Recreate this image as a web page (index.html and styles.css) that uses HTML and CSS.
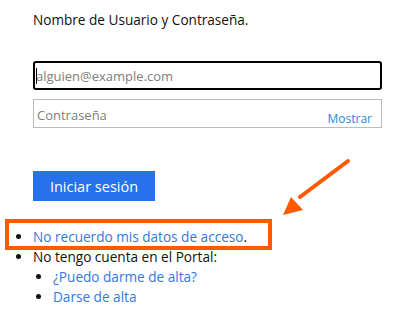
FILE: index.html
```html
<!DOCTYPE html>
<html lang="es">
<head>
  <meta charset="UTF-8" />
  <meta name="viewport" content="width=device-width, initial-scale=1.0">
  <title>Iniciar sesión</title>
  <link rel="stylesheet" href="styles.css">
</head>
<body>

  <main class="login">
    <p class="titulo">Nombre de Usuario y Contraseña.</p>

    <form class="formulario">
      <div class="campo campo-activo">
        <span class="cursor"></span>
        <input type="email" placeholder="alguien@example.com">
      </div>
      <div class="campo">
        <input type="password" placeholder="Contraseña">
        <a href="#" class="mostrar">Mostrar</a>
      </div>
      <button type="button" class="btn-entrar">Iniciar sesión</button>
    </form>
  </main>

  <ul class="ayuda">
    <li><a href="#">No recuerdo mis datos de acceso</a>.</li>
    <li>No tengo cuenta en el Portal:
      <ul>
        <li><a href="#">¿Puedo darme de alta?</a></li>
        <li><a href="#">Darse de alta</a></li>
      </ul>
    </li>
  </ul>

  <!-- anotación -->
  <div class="marco"></div>
  <svg class="flecha" width="80" height="60" viewBox="0 0 80 60">
    <line x1="76" y1="4" x2="28" y2="40" stroke="#ff5a00" stroke-width="4" stroke-linecap="round" />
    <polygon points="11,58 19,40 31,53" fill="#ff5a00" />
  </svg>

</body>
</html>
```

FILE: styles.css
```css
* { box-sizing: border-box; }
body {
  font-family: 'Open Sans', 'Noto Sans', sans-serif;
  font-size: 13.6px;
  margin: 0;
  background: white;
  color: #111;
  position: relative;
  height: 321px;
  overflow: hidden;
}
a {
  color: #3179e4;
  text-decoration: none;
}
.login {
  padding: 10px 11px 0 33px;
}
.titulo {
  margin: 0;
  line-height: 20px;
}
.formulario {
  margin-top: 31px;
  display: flex;
  flex-direction: column;
}
.campo {
  position: relative;
  height: 29px;
  border: 1px solid #bbb;
  margin-bottom: 9px;
}
.campo input {
  border: none;
  outline: none;
  width: 100%;
  height: 100%;
  padding: 2px 3px 0;
  font: inherit;
  font-size: 13px;
  background: transparent;
}
.campo input::placeholder {
  color: #808080;
}
.campo-activo {
  height: 29px;
  border: 2px solid #000;
  border-radius: 3px;
}
.campo-activo input {
  padding: 0 1px;
}
.cursor {
  position: absolute;
  left: 1px;
  top: 5px;
  width: 1px;
  height: 16px;
  background: #000;
}
.mostrar {
  position: absolute;
  right: 9px;
  bottom: 0;
  color: #2b88d8;
  font-size: 12px;
}
.btn-entrar {
  margin-top: 34px;
  width: 122px;
  height: 30px;
  border: none;
  background: #2672ec;
  color: white;
  font: inherit;
  font-size: 14.5px;
  cursor: pointer;
}
.ayuda {
  margin: 26px 0 0;
  padding-left: 33px;
  line-height: 20px;
}
.ayuda ul {
  margin: 0;
  padding-left: 20px;
  list-style: disc;
}
.marco {
  position: absolute;
  left: 5px;
  top: 219px;
  width: 267px;
  height: 31px;
  border: 4px solid #ff5a00;
}
.flecha {
  position: absolute;
  left: 272px;
  top: 157px;
}
```
